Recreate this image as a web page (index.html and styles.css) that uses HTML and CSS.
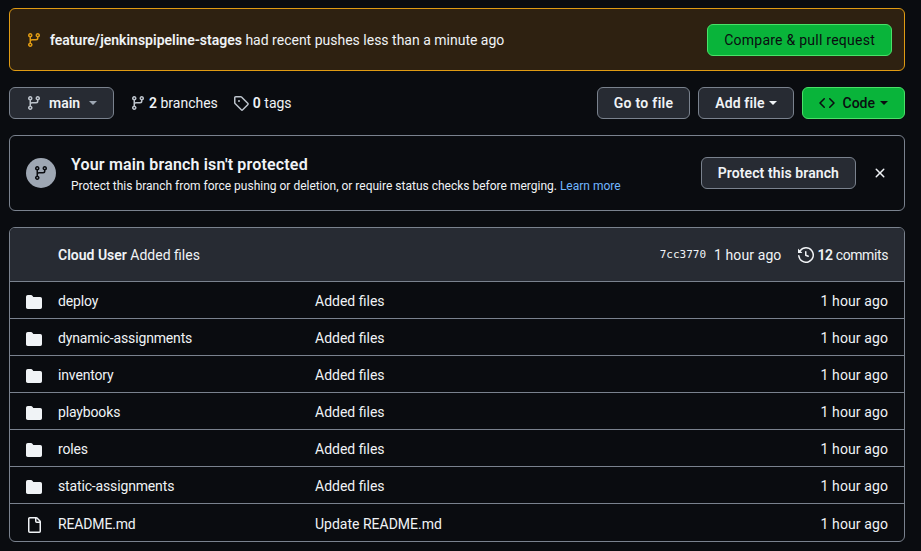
FILE: index.html
```html
<!DOCTYPE html>
<html lang="en">
  <head>
    <meta charset="UTF-8" />
    <title>Repository</title>
    <link rel="stylesheet" href="styles.css">
  </head>
  <body>
    <svg class="sprites" width="0" height="0">
      <symbol id="branch" viewBox="0 0 16 16"><path fill-rule="evenodd" d="M9.5 3.25a2.25 2.25 0 1 1 3 2.122V6A2.5 2.5 0 0 1 10 8.5H6a1 1 0 0 0-1 1v1.128a2.251 2.251 0 1 1-1.5 0V5.372a2.25 2.25 0 1 1 1.5 0v1.836A2.493 2.493 0 0 1 6 7h4a1 1 0 0 0 1-1v-.628A2.25 2.25 0 0 1 9.5 3.25Zm-6 0a.75.75 0 1 0 1.5 0 .75.75 0 0 0-1.5 0Zm8.25-.75a.75.75 0 1 0 0 1.5.75.75 0 0 0 0-1.5ZM4.25 12a.75.75 0 1 0 0 1.5.75.75 0 0 0 0-1.5Z"/></symbol>
      <symbol id="folder" viewBox="0 0 16 16"><path d="M1.75 1A1.75 1.75 0 0 0 0 2.75v10.5C0 14.216.784 15 1.75 15h12.5A1.75 1.75 0 0 0 16 13.25v-8.5A1.75 1.75 0 0 0 14.25 3H7.5a.25.25 0 0 1-.2-.1l-.9-1.2C6.07 1.26 5.55 1 5 1H1.75Z"/></symbol>
      <symbol id="file" viewBox="0 0 16 16"><path fill-rule="evenodd" d="M2 1.75C2 .784 2.784 0 3.75 0h6.586c.464 0 .909.184 1.237.513l2.914 2.914c.329.328.513.773.513 1.237v9.586A1.75 1.75 0 0 1 13.25 16h-9.5A1.75 1.75 0 0 1 2 14.25Zm1.75-.25a.25.25 0 0 0-.25.25v12.5c0 .138.112.25.25.25h9.5a.25.25 0 0 0 .25-.25V6h-2.75A1.75 1.75 0 0 1 9 4.25V1.5Zm6.75.062V4.25c0 .138.112.25.25.25h2.688l-.011-.013-2.914-2.914-.013-.011Z"/></symbol>
    </svg>

    <div class="push-banner">
      <div class="push-text">
        <svg class="icon icon-push"><use href="#branch"></use></svg>
        <span><strong>feature/jenkinspipeline-stages</strong> had recent pushes less than a minute ago</span>
      </div>
      <a class="btn btn-green btn-compare">Compare &amp; pull request</a>
    </div>

    <div class="repo-bar">
      <a class="btn btn-branch">
        <svg class="icon icon-muted"><use href="#branch"></use></svg>
        <strong>main</strong>
        <span class="caret caret-muted"></span>
      </a>
      <div class="repo-count repo-branches">
        <svg class="icon icon-muted"><use href="#branch"></use></svg>
        <span><strong>2</strong> branches</span>
      </div>
      <div class="repo-count repo-tags">
        <svg class="icon icon-muted" viewBox="0 0 16 16"><path fill-rule="evenodd" d="M1 7.775V2.75C1 1.784 1.784 1 2.75 1h5.025c.464 0 .91.184 1.238.513l6.25 6.25a1.75 1.75 0 0 1 0 2.474l-5.026 5.026a1.75 1.75 0 0 1-2.474 0l-6.25-6.25A1.752 1.752 0 0 1 1 7.775Zm1.5 0c0 .066.026.13.073.177l6.25 6.25a.25.25 0 0 0 .354 0l5.025-5.025a.25.25 0 0 0 0-.354l-6.25-6.25a.25.25 0 0 0-.177-.073H2.75a.25.25 0 0 0-.25.25ZM6 5a1 1 0 1 1 0 2 1 1 0 0 1 0-2Z"/></svg>
        <span><strong>0</strong> tags</span>
      </div>
      <div class="repo-actions">
        <a class="btn btn-plain btn-go">Go to file</a>
        <a class="btn btn-plain">Add file <span class="caret"></span></a>
        <a class="btn btn-green btn-code">
          <svg class="icon" viewBox="0 0 16 16"><path d="m11.28 3.22 4.25 4.25a.75.75 0 0 1 0 1.06l-4.25 4.25a.749.749 0 0 1-1.06-1.06L13.94 8l-3.72-3.72a.749.749 0 1 1 1.06-1.06Zm-6.56 0a.751.751 0 0 1 1.06 1.06L2.06 8l3.72 3.72a.749.749 0 1 1-1.06 1.06L.47 8.53a.75.75 0 0 1 0-1.06Z"/></svg>
          Code <span class="caret"></span>
        </a>
      </div>
    </div>

    <div class="protect-box">
      <div class="protect-icon"><svg class="icon"><use href="#branch"></use></svg></div>
      <div class="protect-text">
        <h2>Your main branch isn't protected</h2>
        <p>Protect this branch from force pushing or deletion, or require status checks before merging. <a>Learn more</a></p>
      </div>
      <a class="btn btn-plain btn-protect">Protect this branch</a>
      <svg class="icon icon-close" viewBox="0 0 16 16"><path d="M3.72 3.72a.75.75 0 0 1 1.06 0L8 6.94l3.22-3.22a.749.749 0 1 1 1.06 1.06L9.06 8l3.22 3.22a.749.749 0 1 1-1.06 1.06L8 9.06l-3.22 3.22a.749.749 0 1 1-1.06-1.06L6.94 8 3.72 4.78a.75.75 0 0 1 0-1.06Z"/></svg>
    </div>

    <div class="file-table">
      <div class="commit-row">
        <div class="commit-msg"><strong>Cloud User</strong> Added files</div>
        <code class="commit-sha">7cc3770</code>
        <span class="commit-age">1 hour ago</span>
        <svg class="icon icon-history" viewBox="0 0 16 16"><path d="m.427 1.927 1.215 1.215a8.002 8.002 0 1 1-1.6 5.685.75.75 0 1 1 1.493-.154 6.5 6.5 0 1 0 1.18-4.458l1.358 1.358A.25.25 0 0 1 3.896 6H.25A.25.25 0 0 1 0 5.75V2.104a.25.25 0 0 1 .427-.177ZM7.75 4a.75.75 0 0 1 .75.75v2.992l2.028.812a.75.75 0 0 1-.557 1.392l-2.5-1A.751.751 0 0 1 7 8.25v-3.5A.75.75 0 0 1 7.75 4Z"/></svg>
        <span class="commit-count"><strong>12</strong> commits</span>
      </div>
      <div class="file-row">
        <svg class="icon icon-row"><use href="#folder"></use></svg>
        <span class="file-name">deploy</span><span class="file-msg">Added files</span><span class="file-age">1 hour ago</span>
      </div>
      <div class="file-row">
        <svg class="icon icon-row"><use href="#folder"></use></svg>
        <span class="file-name">dynamic-assignments</span><span class="file-msg">Added files</span><span class="file-age">1 hour ago</span>
      </div>
      <div class="file-row">
        <svg class="icon icon-row"><use href="#folder"></use></svg>
        <span class="file-name">inventory</span><span class="file-msg">Added files</span><span class="file-age">1 hour ago</span>
      </div>
      <div class="file-row">
        <svg class="icon icon-row"><use href="#folder"></use></svg>
        <span class="file-name">playbooks</span><span class="file-msg">Added files</span><span class="file-age">1 hour ago</span>
      </div>
      <div class="file-row">
        <svg class="icon icon-row"><use href="#folder"></use></svg>
        <span class="file-name">roles</span><span class="file-msg">Added files</span><span class="file-age">1 hour ago</span>
      </div>
      <div class="file-row">
        <svg class="icon icon-row"><use href="#folder"></use></svg>
        <span class="file-name">static-assignments</span><span class="file-msg">Added files</span><span class="file-age">1 hour ago</span>
      </div>
      <div class="file-row">
        <svg class="icon icon-row"><use href="#file"></use></svg>
        <span class="file-name">README.md</span><span class="file-msg">Update README.md</span><span class="file-age">1 hour ago</span>
      </div>
    </div>
  </body>
</html>
```

FILE: styles.css
```css
body {
  margin: 0;
  padding: 8px 16px 0 9px;
  height: 543px;
  overflow: hidden;
  background-color: #0a0c10;
  color: #f0f3f6;
  font-family: Roboto, sans-serif;
  font-size: 14px;
  line-height: 20px;
}

.sprites {
  position: absolute;
}

strong {
  font-weight: 600;
}

.icon {
  width: 16px;
  height: 16px;
  flex: none;
  fill: currentColor;
}

.icon-muted {
  color: #bdc4cc;
}

.btn {
  display: flex;
  align-items: center;
  box-sizing: border-box;
  height: 32px;
  border: 1px solid #7a828e;
  border-radius: 6px;
  background-color: #272b33;
  white-space: nowrap;
}

.btn-plain {
  padding: 0 16px;
  font-weight: 600;
  letter-spacing: 0.1px;
}

.btn-go {
  letter-spacing: 0.3px;
}

.btn-green {
  border-color: #4ae168;
  background-color: #09b43a;
  color: #0a0c10;
}

.caret {
  display: inline-block;
  margin-left: 4px;
  border-top: 4px solid currentColor;
  border-left: 4px solid transparent;
  border-right: 4px solid transparent;
}

.caret-muted {
  margin-left: 2px;
  color: #9ea7b3;
}

.push-banner {
  display: flex;
  align-items: center;
  justify-content: space-between;
  box-sizing: border-box;
  height: 63px;
  padding: 0 12px 0 16px;
  border: 1px solid #e09b13;
  border-radius: 6px;
  background-color: #2e2111;
}

.push-text {
  display: flex;
  align-items: center;
  gap: 8px;
}

.icon-push {
  color: #e09b13;
}

.btn-compare {
  padding: 0 16px;
  letter-spacing: 0.25px;
}

.repo-bar {
  display: flex;
  align-items: center;
  margin-top: 16px;
}

.btn-branch {
  gap: 7px;
  width: 105px;
  padding: 0 16px;
}

.repo-count {
  display: flex;
  align-items: center;
  gap: 4px;
}

.repo-branches {
  gap: 3px;
  margin-left: 16px;
}

.repo-tags {
  margin-left: 15px;
}

.repo-actions {
  display: flex;
  gap: 8px;
  margin-left: auto;
}

.btn-code {
  gap: 8px;
  padding: 0 16px;
  font-weight: 500;
}

.btn-code .caret {
  margin-left: -3px;
}

.protect-box {
  display: flex;
  align-items: center;
  box-sizing: border-box;
  height: 76px;
  margin-top: 16px;
  padding: 0 16px;
  border: 1px solid #7a828e;
  border-radius: 6px;
}

.protect-icon {
  display: flex;
  align-items: center;
  justify-content: center;
  flex: none;
  width: 30px;
  height: 30px;
  border-radius: 50%;
  background-color: #9ea7b3;
  color: #0a0c10;
}

.protect-text {
  flex: 1;
  margin-left: 15px;
  padding-top: 2px;
}

.protect-text h2 {
  margin: 0;
  font-size: 16px;
  font-weight: 600;
  line-height: 24px;
  letter-spacing: 0.17px;
}

.protect-text p {
  margin: 0;
  font-size: 12px;
  line-height: 18px;
}

.protect-text a {
  color: #71b7ff;
}

.icon-close {
  margin-left: 16px;
}

.file-table {
  margin-top: 16px;
  border: 1px solid #7a828e;
  border-radius: 6px;
  overflow: hidden;
}

.commit-row {
  display: flex;
  align-items: center;
  height: 53px;
  padding: 0 16px 0 48px;
  background-color: #272b33;
}

.commit-msg {
  flex: 1;
}

.commit-sha {
  font-family: "DejaVu Sans Mono", monospace;
  font-size: 11px;
}

.commit-age {
  margin-left: 8px;
  letter-spacing: 0.1px;
}

.icon-history {
  margin-left: 17px;
  margin-right: 3px;
}

.commit-count {
  letter-spacing: -0.4px;
}

.file-row {
  display: flex;
  align-items: center;
  box-sizing: border-box;
  height: 37px;
  padding: 2px 16px 0;
  border-top: 1px solid #7a828e;
}

.file-row:last-child {
  height: 38px;
}

.icon-row {
  margin-top: 2px;
}

.file-name {
  width: 257px;
  margin-left: 16px;
  letter-spacing: -0.15px;
}

.file-msg {
  flex: 1;
}

.file-age {
  letter-spacing: 0.1px;
}
```
